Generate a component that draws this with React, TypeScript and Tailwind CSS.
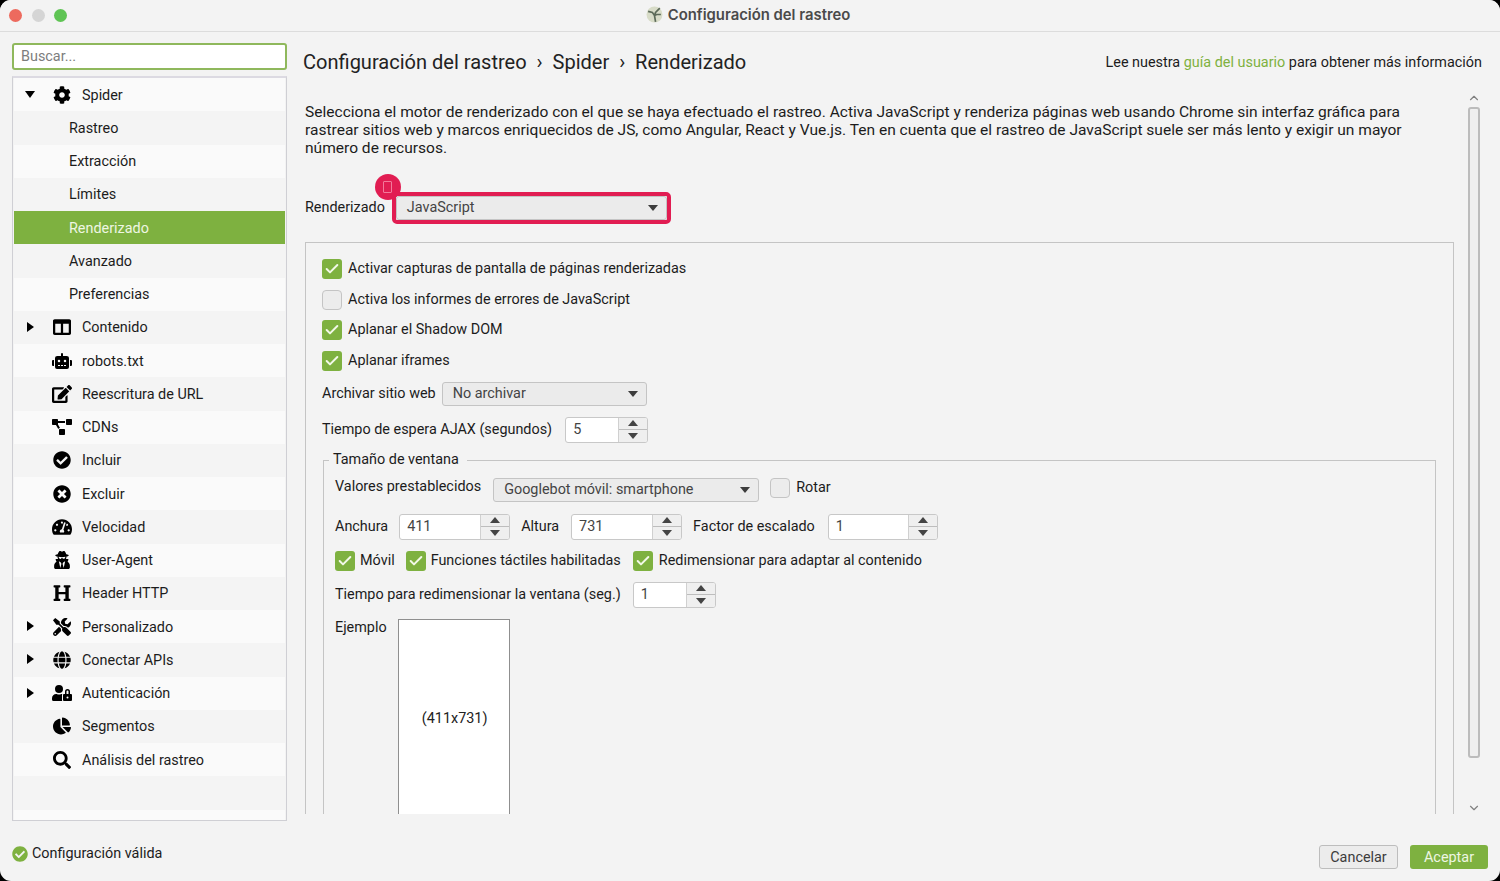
import type { ReactNode } from "react";
import {
    FaCog, FaColumns, FaRobot, FaEdit, FaProjectDiagram, FaCheckCircle, FaTimesCircle,
    FaTachometerAlt, FaUserSecret, FaHeading, FaTools, FaGlobe, FaUserLock, FaChartPie, FaSearch,
} from "react-icons/fa";
import { FiCheck, FiChevronDown, FiChevronUp } from "react-icons/fi";

type TreeItem = { label: string; icon?: ReactNode; arrow?: "down" | "right"; active?: boolean };

const iconClass = "w-[18px] h-[18px] text-black";

const tree: TreeItem[] = [
    { label: "Spider", icon: <FaCog className={iconClass} />, arrow: "down" },
    { label: "Rastreo" },
    { label: "Extracción" },
    { label: "Límites" },
    { label: "Renderizado", active: true },
    { label: "Avanzado" },
    { label: "Preferencias" },
    { label: "Contenido", icon: <FaColumns className={iconClass} />, arrow: "right" },
    { label: "robots.txt", icon: <FaRobot className="w-5 h-5 text-black" /> },
    { label: "Reescritura de URL", icon: <FaEdit className="w-5 h-5 text-black" /> },
    { label: "CDNs", icon: <FaProjectDiagram className="w-5 h-5 text-black" /> },
    { label: "Incluir", icon: <FaCheckCircle className={iconClass} /> },
    { label: "Excluir", icon: <FaTimesCircle className={iconClass} /> },
    { label: "Velocidad", icon: <FaTachometerAlt className="w-5 h-5 text-black" /> },
    { label: "User-Agent", icon: <FaUserSecret className={iconClass} /> },
    { label: "Header HTTP", icon: <FaHeading className={iconClass} /> },
    { label: "Personalizado", icon: <FaTools className={iconClass} />, arrow: "right" },
    { label: "Conectar APIs", icon: <FaGlobe className={iconClass} />, arrow: "right" },
    { label: "Autenticación", icon: <FaUserLock className="w-5 h-5 text-black" />, arrow: "right" },
    { label: "Segmentos", icon: <FaChartPie className={iconClass} /> },
    { label: "Análisis del rastreo", icon: <FaSearch className={iconClass} /> },
];

const Caret = () => (
    <svg viewBox="0 0 10 6" className="w-[10px] h-[6px] fill-[#3c3c3c]">
        <path d="M0 0h10L5 6z" />
    </svg>
);

const TreeRow = ({ item, index }: { item: TreeItem; index: number }) => {
    const bg = item.active ? "bg-[#7eb140] text-[#eef6e2]" : index % 2 === 0 ? "bg-[#fafafa] text-[#1c1c1c]" : "bg-[#f4f4f4] text-[#1c1c1c]";
    return (
        <div className={`relative flex items-center h-[33.25px] shrink-0 ${bg}`}>
            {item.arrow === "down" && (
                <svg viewBox="0 0 10 7" className="absolute left-[11px] top-[13px] w-[10px] h-[7px] fill-black">
                    <path d="M0 0h10L5 7z" />
                </svg>
            )}
            {item.arrow === "right" && (
                <svg viewBox="0 0 7 10" className="absolute left-[13px] top-[11px] w-[7px] h-[10px] fill-black">
                    <path d="M0 0l7 5-7 5z" />
                </svg>
            )}
            {item.icon ? (
                <>
                    <span className="w-[38px] ml-[29px] mr-px flex justify-center shrink-0">{item.icon}</span>
                    <span className="pt-[2px]">{item.label}</span>
                </>
            ) : (
                <span className="ml-[55px] pt-[2px]">{item.label}</span>
            )}
        </div>
    );
};

const Check = ({ label, checked = true, size = "", tight = false }: { label: string; checked?: boolean; size?: string; tight?: boolean }) => (
    <div className={`flex items-center ${tight ? "gap-[5px]" : "gap-[6px]"} ${size}`}>
        {checked ? (
            <span className="w-5 h-5 rounded-[3px] bg-[#7eb140] flex items-center justify-center shrink-0">
                <FiCheck className="w-4 h-4 text-[#f2f8e8]" strokeWidth={3} />
            </span>
        ) : (
            <span className="w-5 h-5 rounded-[4px] bg-[#ececec] border border-[#c4c4c4] shrink-0" />
        )}
        <span>{label}</span>
    </div>
);

const Combo = ({ value, className }: { value: string; className: string }) => (
    <div className={`flex items-center justify-between h-6 rounded-[3px] border border-[#c4c4c4] bg-[#ebebeb] pl-[10px] pr-[8px] text-[#444] ${className}`}>
        <span>{value}</span>
        <Caret />
    </div>
);

const Spin = ({ value, className }: { value: string; className: string }) => (
    <div className={`flex h-[26px] rounded-[3px] border border-[#c8c8c8] bg-white text-[#444] overflow-hidden ${className}`}>
        <span className="flex-1 flex items-center pl-[7px]">{value}</span>
        <div className="w-[29px] flex flex-col bg-[#efefef] border-l border-[#d0d0d0]">
            <span className="flex-1 flex items-center justify-center border-b border-[#bdbdbd]">
                <svg viewBox="0 0 10 6" className="w-[10px] h-[6px] fill-[#444]"><path d="M5 0l5 6H0z" /></svg>
            </span>
            <span className="flex-1 flex items-center justify-center">
                <svg viewBox="0 0 10 6" className="w-[10px] h-[6px] fill-[#444]"><path d="M0 0h10L5 6z" /></svg>
            </span>
        </div>
    </div>
);

export default function App() {
    return (
        <div className="w-[1500px] h-[881px] bg-black overflow-hidden text-[14.4px] leading-[18px] text-[#1c1c1c] font-['Roboto',sans-serif]">
            <div className="w-full h-full rounded-[11px] bg-[#f3f3f3] overflow-hidden flex flex-col">
                {/* Title bar */}
                <div className="relative h-[32px] shrink-0 flex items-center justify-center border-b border-[#dcdcdc] bg-[#f3f3f3] pb-[2px] pr-[4px]">
                    <div className="absolute left-[9px] top-[9px] flex gap-[9.5px]">
                        <span className="w-[13px] h-[13px] rounded-full bg-[#ed6a5e]" />
                        <span className="w-[13px] h-[13px] rounded-full bg-[#d5d5d5]" />
                        <span className="w-[13px] h-[13px] rounded-full bg-[#5fc454]" />
                    </div>
                    <svg viewBox="0 0 16 16" className="w-[17px] h-[17px] mr-[5px]">
                        <circle cx="8" cy="8" r="7.5" fill="#d8dcc8" />
                        <path d="M2 5l4 1 2 3 1 6M13 2L9 6 8 9M14 8l-4 0-2 1" stroke="#5c6a58" strokeWidth="1.6" fill="none" />
                    </svg>
                    <span className="font-['Inter',sans-serif] font-semibold text-[14.85px] text-[#4a4a4a]">Configuración del rastreo</span>
                </div>

                <div className="flex-1 flex min-h-0">
                    {/* Left column */}
                    <aside className="w-[275px] shrink-0 ml-[12px] flex flex-col">
                        <div className="mt-[11px] h-[27px] rounded-[3px] border-2 border-[#8fb85c] bg-white flex items-center px-[7px] text-[#7d7d7d]">
                            Buscar...
                        </div>
                        <div className="mt-[6px] h-[745px] border border-[#cfcfd4] border-t-2 border-t-[#dcdae2] px-px flex flex-col overflow-hidden">
                            {tree.map((item, i) => (
                                <TreeRow key={item.label} item={item} index={i} />
                            ))}
                            <div className="h-[33.25px] shrink-0 bg-[#f4f4f4]" />
                            <div className="flex-1 bg-[#fafafa]" />
                        </div>
                        <div className="mt-[24px] flex items-center gap-[4px]">
                            <FaCheckCircle className="w-4 h-4 text-[#7eb140]" />
                            <span>Configuración válida</span>
                        </div>
                    </aside>

                    {/* Right column */}
                    <main className="flex-1 min-w-0 ml-[16px] mr-[18px] flex flex-col">
                        <header className="h-[60px] shrink-0 flex items-center justify-between">
                            <h1 className="text-[20.05px] text-[#222]">Configuración del rastreo&nbsp; › &nbsp;Spider&nbsp; › &nbsp;Renderizado</h1>
                            <p className="pt-[2px]">
                                Lee nuestra <span className="text-[#7eb140]">guía del usuario</span> para obtener más información
                            </p>
                        </header>

                        <div className="h-[722px] shrink-0 flex overflow-hidden">
                            <div className="w-[1149px] shrink-0 ml-[2px] pt-[11px] flex flex-col">
                                <p className="w-[1130px] text-[15.55px]">
                                    Selecciona el motor de renderizado con el que se haya efectuado el rastreo. Activa JavaScript y renderiza páginas web usando Chrome sin interfaz gráfica para rastrear sitios web y marcos enriquecidos de JS, como Angular, React y Vue.js. Ten en cuenta que el rastreo de JavaScript suele ser más lento y exigir un mayor número de recursos.
                                </p>
                                <div className="mt-[18px] h-px bg-[#d6d6d6]" />

                                <div className="mt-[21px] flex items-center gap-[11px] h-6">
                                    <span>Renderizado</span>
                                    <div className="relative">
                                        <Combo value="JavaScript" className="w-[271px]" />
                                        <div className="absolute -inset-[4px] rounded-[5px] border-[4px] border-[#e11d52]" />
                                        <div className="absolute -left-[21px] -top-[22px] w-[26px] h-[26px] rounded-full bg-[#e11d52] flex items-center justify-center">
                                            <span className="w-[9px] h-[12px] rounded-[1px] border border-[#f27a9a]" />
                                        </div>
                                    </div>
                                </div>

                                <div className="mt-[22px] flex-1 border border-[#c4c4c4] border-b-0 pl-[16px] pr-[17px] flex flex-col">
                                    <Check label="Activar capturas de pantalla de páginas renderizadas" size="mt-[16px]" />
                                    <Check label="Activa los informes de errores de JavaScript" checked={false} size="mt-[10.5px]" />
                                    <Check label="Aplanar el Shadow DOM" size="mt-[10.5px]" />
                                    <Check label="Aplanar iframes" size="mt-[10.5px]" />

                                    <div className="mt-[11px] flex items-center gap-[6px]">
                                        <span>Archivar sitio web</span>
                                        <Combo value="No archivar" className="w-[205px]" />
                                    </div>
                                    <div className="mt-[11px] flex items-center gap-[13px]">
                                        <span>Tiempo de espera AJAX (segundos)</span>
                                        <Spin value="5" className="w-[83px]" />
                                    </div>

                                    {/* Tamaño de ventana */}
                                    <div className="relative mt-[17px] ml-px flex-1 border border-[#c4c4c4] border-b-0 pl-[11px] flex flex-col">
                                        <span className="absolute -top-[10px] left-[5px] px-[4px] pr-[8px] bg-[#f3f3f3]">Tamaño de ventana</span>
                                        <div className="mt-[17px] flex items-center">
                                            <span className="-translate-y-[3px] mr-[12px]">Valores prestablecidos</span>
                                            <Combo value="Googlebot móvil: smartphone" className="w-[266px] mr-[11px]" />
                                            <Check label="Rotar" checked={false} size="-translate-y-[2px]" />
                                        </div>
                                        <div className="mt-[12px] flex items-center gap-[11px]">
                                            <span>Anchura</span>
                                            <Spin value="411" className="w-[111px]" />
                                            <span>Altura</span>
                                            <Spin value="731" className="w-[111px] ml-px" />
                                            <span>Factor de escalado</span>
                                            <Spin value="1" className="w-[110px] ml-[2px]" />
                                        </div>
                                        <div className="mt-[11px] flex items-center">
                                            <Check label="Móvil" tight size="mr-[11px]" />
                                            <Check label="Funciones táctiles habilitadas" tight size="mr-[12px]" />
                                            <Check label="Redimensionar para adaptar al contenido" />
                                        </div>
                                        <div className="mt-[11px] flex items-center gap-[12px]">
                                            <span>Tiempo para redimensionar la ventana (seg.)</span>
                                            <Spin value="1" className="w-[83px]" />
                                        </div>
                                        <div className="mt-[11px] flex-1 flex gap-[11px]">
                                            <span>Ejemplo</span>
                                            <div className="w-[112px] h-[240px] border border-[#8f8f8f] bg-white flex items-center justify-center text-[#222] pb-[40px] pl-[2px]">
                                                (411x731)
                                            </div>
                                        </div>
                                    </div>
                                </div>
                            </div>

                            {/* Scrollbar */}
                            <div className="w-[14px] ml-[13px] shrink-0 flex flex-col items-center">
                                <FiChevronUp className="w-[14px] h-[14px] -mt-px shrink-0 text-[#808080]" />
                                <div className="w-3 mt-[2px] h-[651px] rounded-[3px] border-2 border-[#bcbcbc] bg-[#efefef] shrink-0" />
                                <div className="flex-1" />
                                <FiChevronDown className="w-[14px] h-[14px] -mb-px shrink-0 text-[#808080]" />
                            </div>
                        </div>

                        <footer className="flex-1 flex items-start justify-end gap-[12px] pt-[31px] -mr-[6px]">
                            <button className="w-[79px] h-[24px] rounded-[3px] border border-[#bdbdbd] bg-[#ececec] text-[#3c3c3c] pt-px">Cancelar</button>
                            <button className="w-[78px] h-[24px] rounded-[3px] bg-[#7eb140] text-[#eef6e2] pt-px">Aceptar</button>
                        </footer>
                    </main>
                </div>
            </div>
        </div>
    );
}
